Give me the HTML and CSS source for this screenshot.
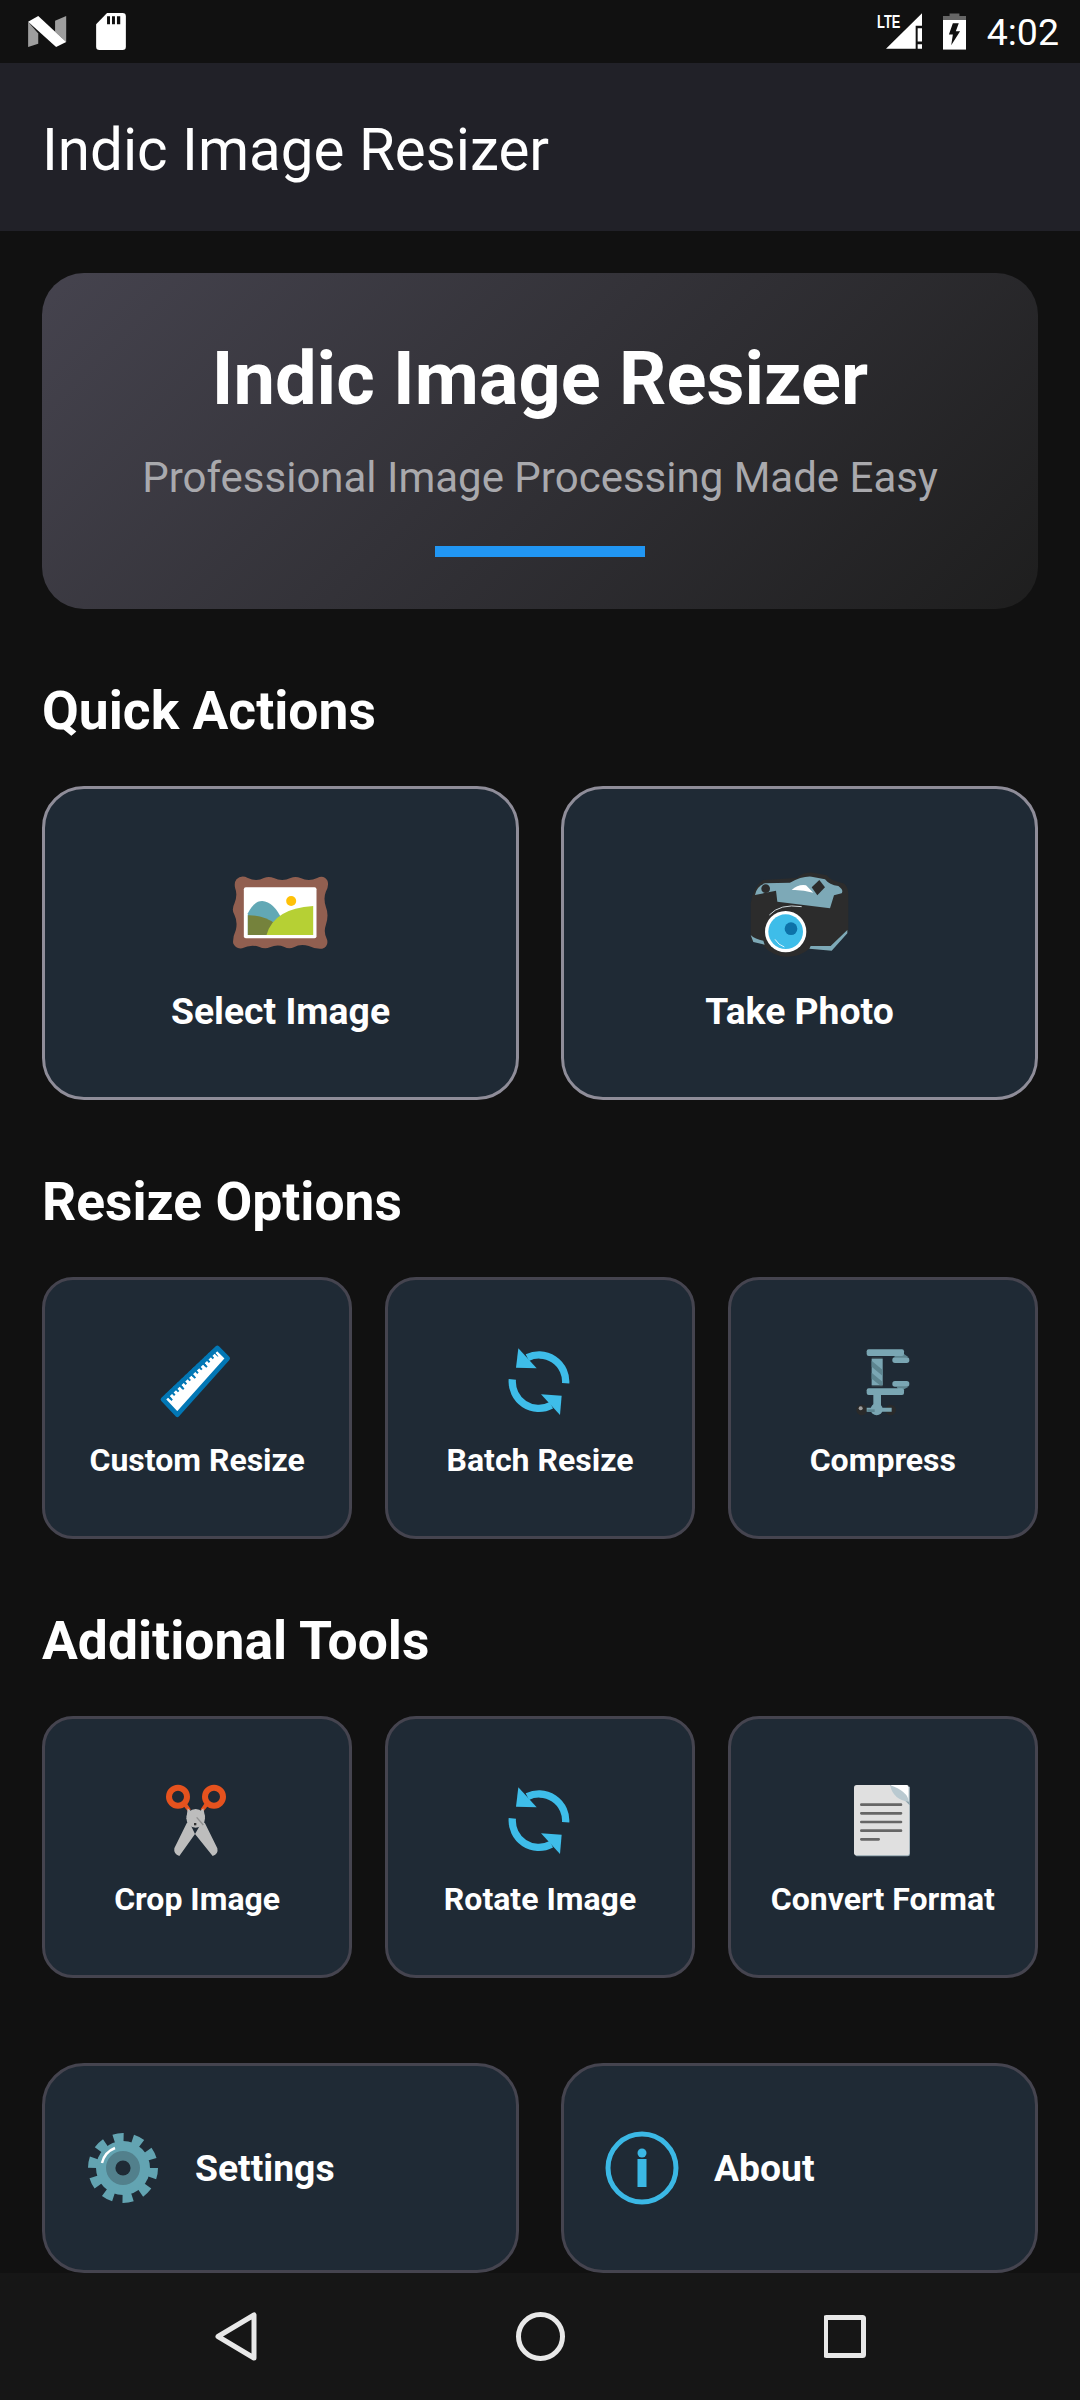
FILE: index.html
```html
<!DOCTYPE html>
<html lang="en">
<head>
<meta charset="utf-8">
<title>Indic Image Resizer</title>
<link rel="stylesheet" href="styles.css">
</head>
<body>
<div class="status-bar">
  <div class="status-left">
    <svg width="39" height="31" viewBox="85 48 115 92"><polygon points="85,65 115,100 115,130 85,140" fill="#9e9e9e"/><polygon points="165,62 198,48 198,125 165,95" fill="#9e9e9e"/><polygon points="85,65 115,48 198,125 168,140" fill="#fff"/></svg>
    <svg width="30" height="37" viewBox="287 38 90 112"><path d="M320 38H367Q377 38 377 48V140Q377 150 367 150H297Q287 150 287 140V72Z" fill="#fff"/><path d="M320 48h9v24h-9zM335 48h9v24h-9zM350 48h10v24h-10z" fill="#111"/></svg>
  </div>
  <div class="status-right">
    <svg width="45" height="37" viewBox="108 40 135 110"><text x="108" y="85" class="lte" textLength="70" lengthAdjust="spacingAndGlyphs">LTE</text><polygon points="135,147 243,40 243,78 224,78 224,147" fill="#fff"/><path d="M230 85h13v40h-13zM230 133h13v14h-13z" fill="#fff"/></svg>
    <svg width="23" height="37" viewBox="310 38 70 110"><path d="M330 38h30v8h20v14H310V46h20z" fill="#666"/><path d="M310 58h70v90h-70z" fill="#fff"/><polygon points="340,68 358,68 349,92 362,92 335,135 340,102 328,102" fill="#111"/></svg>
    <span class="time">4:02</span>
  </div>
</div>
<header class="app-bar">Indic Image Resizer</header>
<main class="content">
  <section class="hero">
    <h1 class="hero-title">Indic Image Resizer</h1>
    <p class="hero-sub">Professional Image Processing Made Easy</p>
    <div class="hero-bar"></div>
  </section>

  <h2 class="heading">Quick Actions</h2>
  <div class="row-2">
    <button class="card card-large">
      <svg class="icon" viewBox="97.5 45 288 288"><path d="M108 88Q122 74 142 84Q168 96 190 84Q205 78 220 84Q245 96 270 84Q285 78 300 84Q325 96 350 84Q370 74 381 92Q386 108 376 125Q368 145 376 170Q386 195 376 225Q368 248 380 270Q384 290 365 296Q345 298 325 288Q300 280 280 292Q265 298 250 290Q230 282 208 292Q192 298 175 290Q150 282 125 295Q105 298 98 280Q96 262 106 240Q112 215 102 195Q92 180 102 160Q112 135 104 115Q100 98 108 88Z" fill="#915f50"/><rect x="130" y="112" width="218" height="153" rx="6" fill="#fff"/><circle cx="272" cy="153" r="15" fill="#ffc107"/><path d="M142 190Q160 153 185 153Q220 155 245 210L240 255H142Z" fill="#62a8b5"/><path d="M142 196Q190 195 225 222L215 255H142Z" fill="#75823c"/><path d="M198 255Q220 175 338 168V255Z" fill="#b6d034"/></svg>
      <span class="label">Select Image</span>
    </button>
    <button class="card card-large">
      <svg class="icon" viewBox="66 45 288 288"><path d="M62 160Q70 110 100 90L200 84Q220 66 250 68L290 76Q305 95 340 100Q356 110 355 135V245L305 302L238 296Q200 328 150 318Q112 306 98 284L62 272Z" fill="#2c2c2c"/><path d="M75 135Q80 108 105 100L180 98Q215 78 245 80L285 88Q298 105 325 108Q342 120 335 130L312 136L300 175L142 155L138 122Z" fill="#7da9b7"/><circle cx="107" cy="116" r="13" fill="#2c2c2c"/><polygon points="268,90 285,112 262,136 245,112" fill="#2c2c2c"/><path d="M185 120Q205 102 228 106L250 128Q215 118 185 120Z" fill="#fff"/><path d="M62 255Q75 268 100 272L104 284L70 276Z" fill="#7da9b7"/><path d="M352 240V250L305 302L238 296L242 288H302Z" fill="#7da9b7"/><path d="M118 195Q150 160 215 170" fill="none" stroke="#cfd8dc" stroke-width="3"/><circle cx="167" cy="245" r="62" fill="#fff"/><circle cx="167" cy="245" r="52" fill="#3ebde9"/><circle cx="183" cy="236" r="19" fill="#0d72a8"/><path d="M135 268Q145 285 163 291" fill="none" stroke="#e1f5fe" stroke-width="3"/></svg>
      <span class="label">Take Photo</span>
    </button>
  </div>

  <h2 class="heading">Resize Options</h2>
  <div class="row-3">
    <button class="card card-small">
      <svg class="icon" viewBox="60 36 288 288"><polygon points="265,84 296,115 145,284 102,238" fill="#fff" stroke="#0277b5" stroke-width="14" stroke-linejoin="round"/><line x1="116" y1="231" x2="257" y2="97" class="tick-short"/><line x1="119" y1="234" x2="260" y2="100" class="tick-long"/></svg>
      <span class="label label-small">Custom Resize</span>
    </button>
    <button class="card card-small">
      <svg class="icon" viewBox="66 36 288 288"><use href="#refresh"/></svg>
      <span class="label label-small">Batch Resize</span>
    </button>
    <button class="card card-small">
      <svg class="icon" viewBox="15 36 288 288"><circle cx="95" cy="270" r="16" fill="#2a2a2a"/><circle cx="182" cy="270" r="16" fill="#2a2a2a"/><circle cx="92" cy="265" r="6" fill="#9e9e9e"/><path d="M110 263h75v12h-75zM130 222h23v40h-23z" fill="#7aa6b3"/><circle cx="140" cy="268" r="18" fill="#7aa6b3"/><path d="M112 268h22v8h-22z" fill="#5d8590"/><path d="M190 112L205 102H222L236 112ZM200 200H236L218 210H205Z" fill="#5d8590"/><rect x="110" y="88" width="112" height="20" rx="6" fill="#7aa6b3"/><rect x="110" y="205" width="112" height="20" rx="6" fill="#7aa6b3"/><rect x="187" y="112" width="51" height="17" rx="8" fill="#7aa6b3"/><rect x="187" y="183" width="51" height="17" rx="8" fill="#7aa6b3"/><rect x="125" y="111" width="33" height="90" fill="#2e3b42"/><rect x="125" y="116" width="33" height="80" fill="#7aa6b3"/><path d="M125 122L158 150V168L125 140ZM125 158L158 186V196H150L125 176Z" fill="#5d8590"/></svg>
      <span class="label label-small">Compress</span>
    </button>
  </div>

  <h2 class="heading">Additional Tools</h2>
  <div class="row-3">
    <button class="card card-small">
      <svg class="icon" viewBox="27 33 288 288"><path d="M128 135L146 157L152 148L140 130ZM206 135L188 157L182 148L194 130Z" fill="#e5521e"/><circle cx="114" cy="110" r="27" class="ring"/><circle cx="222" cy="110" r="27" class="ring"/><path d="M190 145L195 170L165 222L118 288Q100 282 103 265L140 190ZM143 145L140 170L165 222L218 288Q236 282 232 265L195 190Z" fill="#bdbdbd"/><circle cx="167" cy="175" r="28" fill="#bdbdbd"/><path d="M170 172L190 195" stroke="#8f8f8f" stroke-width="4"/><rect x="162" y="189" width="7" height="7" fill="#333"/></svg>
      <span class="label label-small">Crop Image</span>
    </button>
    <button class="card card-small">
      <svg class="icon" viewBox="66 36 288 288"><g id="refresh"><path d="M287 190A80 80 0 0 0 172 113M127 178A80 80 0 0 0 244 256" fill="none" stroke="#3ebde9" stroke-width="22"/><polygon points="145,85 138,143 200,145" fill="#3ebde9"/><polygon points="213,223 275,227 270,285" fill="#3ebde9"/></g></svg>
      <span class="label label-small">Rotate Image</span>
    </button>
    <button class="card card-small">
      <svg class="icon" viewBox="15 3 288 288"><path d="M76 50H240V252Q240 259 233 259H80Q76 259 76 252Z" fill="#90a4ae"/><path d="M80 45H180L238 105V248Q238 256 230 256H80Q72 256 72 248V53Q72 45 80 45Z" fill="#e0e0e0"/><path d="M180 45H230Q236 45 236 52V95Z" fill="#fff"/><path d="M180 45Q235 65 236 95Q190 90 180 45Z" fill="#b9c9d0"/><path d="M94 104H213M94 130H213M94 156H213M94 182H213M94 208H146" stroke="#666" stroke-width="8" stroke-linecap="round" fill="none"/></svg>
      <span class="label label-small">Convert Format</span>
    </button>
  </div>

  <div class="row-2 row-bottom">
    <button class="card card-wide">
      <svg class="icon" viewBox="-48 -48 96 96"><circle r="27" fill="#63a4b2"/><circle r="30.5" class="teeth"/><circle r="17" fill="#52808c"/><circle r="7.6" fill="#1f2a35"/><path d="M-21 -5A21.5 21.5 0 0 1 -8 -20" fill="none" stroke="#fff" stroke-width="2.5"/></svg>
      <span class="label">Settings</span>
    </button>
    <button class="card card-wide">
      <svg class="icon" viewBox="-48 -48 96 96"><circle r="34" fill="none" stroke="#3bb8e5" stroke-width="5"/><circle cy="-15" r="4.5" fill="#3bb8e5"/><rect x="-4.5" y="-9" width="9" height="28" fill="#3bb8e5"/></svg>
      <span class="label">About</span>
    </button>
  </div>
</main>
<nav class="nav-bar">
  <svg width="42" height="49" viewBox="0 0 42 49"><path d="M39 3V46L3 24.5Z" class="nav-stroke"/></svg>
  <svg width="49" height="49" viewBox="0 0 49 49"><circle cx="24.5" cy="24.5" r="22" class="nav-stroke"/></svg>
  <svg width="43" height="43" viewBox="0 0 43 43"><rect x="1.5" y="2.5" width="38" height="38" rx="1" class="nav-stroke"/></svg>
</nav>
</body>
</html>
```
FILE: styles.css
```css
* { box-sizing: border-box; }
html, body { margin: 0; padding: 0; }
body {
  width: 1080px;
  height: 2400px;
  overflow: hidden;
  display: flex;
  flex-direction: column;
  background: #111111;
  color: #fff;
  font-family: Roboto, "Liberation Sans", sans-serif;
}
.status-bar {
  height: 63px;
  flex: none;
  display: flex;
  justify-content: space-between;
  align-items: center;
  padding: 0 21px 0 28px;
  background: #111111;
}
.status-left, .status-right { display: flex; align-items: center; }
.status-left { gap: 29px; }
.status-right { gap: 21px; }
.lte { font: bold 54px "Liberation Sans", sans-serif; fill: #fff; }
.time { font-size: 37.5px; line-height: 40px; color: #fff; }
.app-bar {
  height: 168px;
  flex: none;
  display: flex;
  align-items: center;
  padding: 6px 0 0 42px;
  background: #212128;
  font-size: 58.3px;
}
.content {
  flex: 1;
  min-height: 0;
  overflow: hidden;
  padding: 42px 42px 0;
}
.hero {
  height: 336px;
  border-radius: 42px;
  background: linear-gradient(135deg, #45434e 0%, #1e1e1e 100%);
  display: flex;
  flex-direction: column;
  align-items: center;
}
.hero-title {
  margin: 63px 0 0;
  font-size: 74px;
  line-height: 86px;
  font-weight: 700;
}
.hero-sub {
  margin: 31px 0 0;
  font-size: 42px;
  line-height: 50px;
  color: #a9a9ad;
}
.hero-bar {
  width: 210px;
  height: 11px;
  margin-top: 43px;
  background: #2196f3;
}
.heading {
  margin: 69px 0 42px;
  font-size: 53.4px;
  line-height: 66px;
  font-weight: 700;
}
.row-2 { display: grid; grid-template-columns: 1fr 1fr; gap: 42px; }
.row-3 { display: grid; grid-template-columns: 1fr 1fr 1fr; gap: 32.5px; }
.row-bottom { margin-top: 85px; }
.card {
  display: flex;
  padding: 0;
  background: #1f2a35;
  color: #fff;
  font-family: inherit;
  border: 3px solid #45444f;
}
.card-large {
  height: 314px;
  flex-direction: column;
  align-items: center;
  justify-content: flex-start;
  gap: 24.5px;
  padding-top: 76px;
  border-radius: 42px;
  border-color: #8f8d99;
}
.card-small {
  height: 262px;
  flex-direction: column;
  align-items: center;
  justify-content: flex-start;
  gap: 12px;
  padding-top: 52px;
  border-radius: 31px;
}
.card-wide {
  height: 210px;
  align-items: center;
  gap: 24px;
  padding-left: 30px;
  border-radius: 42px;
}
.icon { width: 96px; height: 96px; flex: none; overflow: visible; }
.label {
  font-size: 37.3px;
  line-height: 50px;
  font-weight: 700;
}
.label-small { font-size: 32px; line-height: 40px; white-space: nowrap; }
.tick-short { stroke: #0277b5; stroke-width: 22; stroke-dasharray: 6 10; }
.tick-long { stroke: #0277b5; stroke-width: 24; stroke-dasharray: 6 42; }
.ring { fill: none; stroke: #e5521e; stroke-width: 18; }
.teeth { fill: none; stroke: #63a4b2; stroke-width: 9; stroke-dasharray: 10 9.16; }
.nav-bar {
  height: 127px;
  flex: none;
  display: grid;
  grid-template-columns: 42px 49px 43px;
  justify-content: start;
  column-gap: 259px;
  align-items: center;
  padding: 0 0 0 215px;
  background: #161616;
}
.nav-stroke { fill: none; stroke: #e8e8e8; stroke-width: 5; stroke-linejoin: round; }
```
